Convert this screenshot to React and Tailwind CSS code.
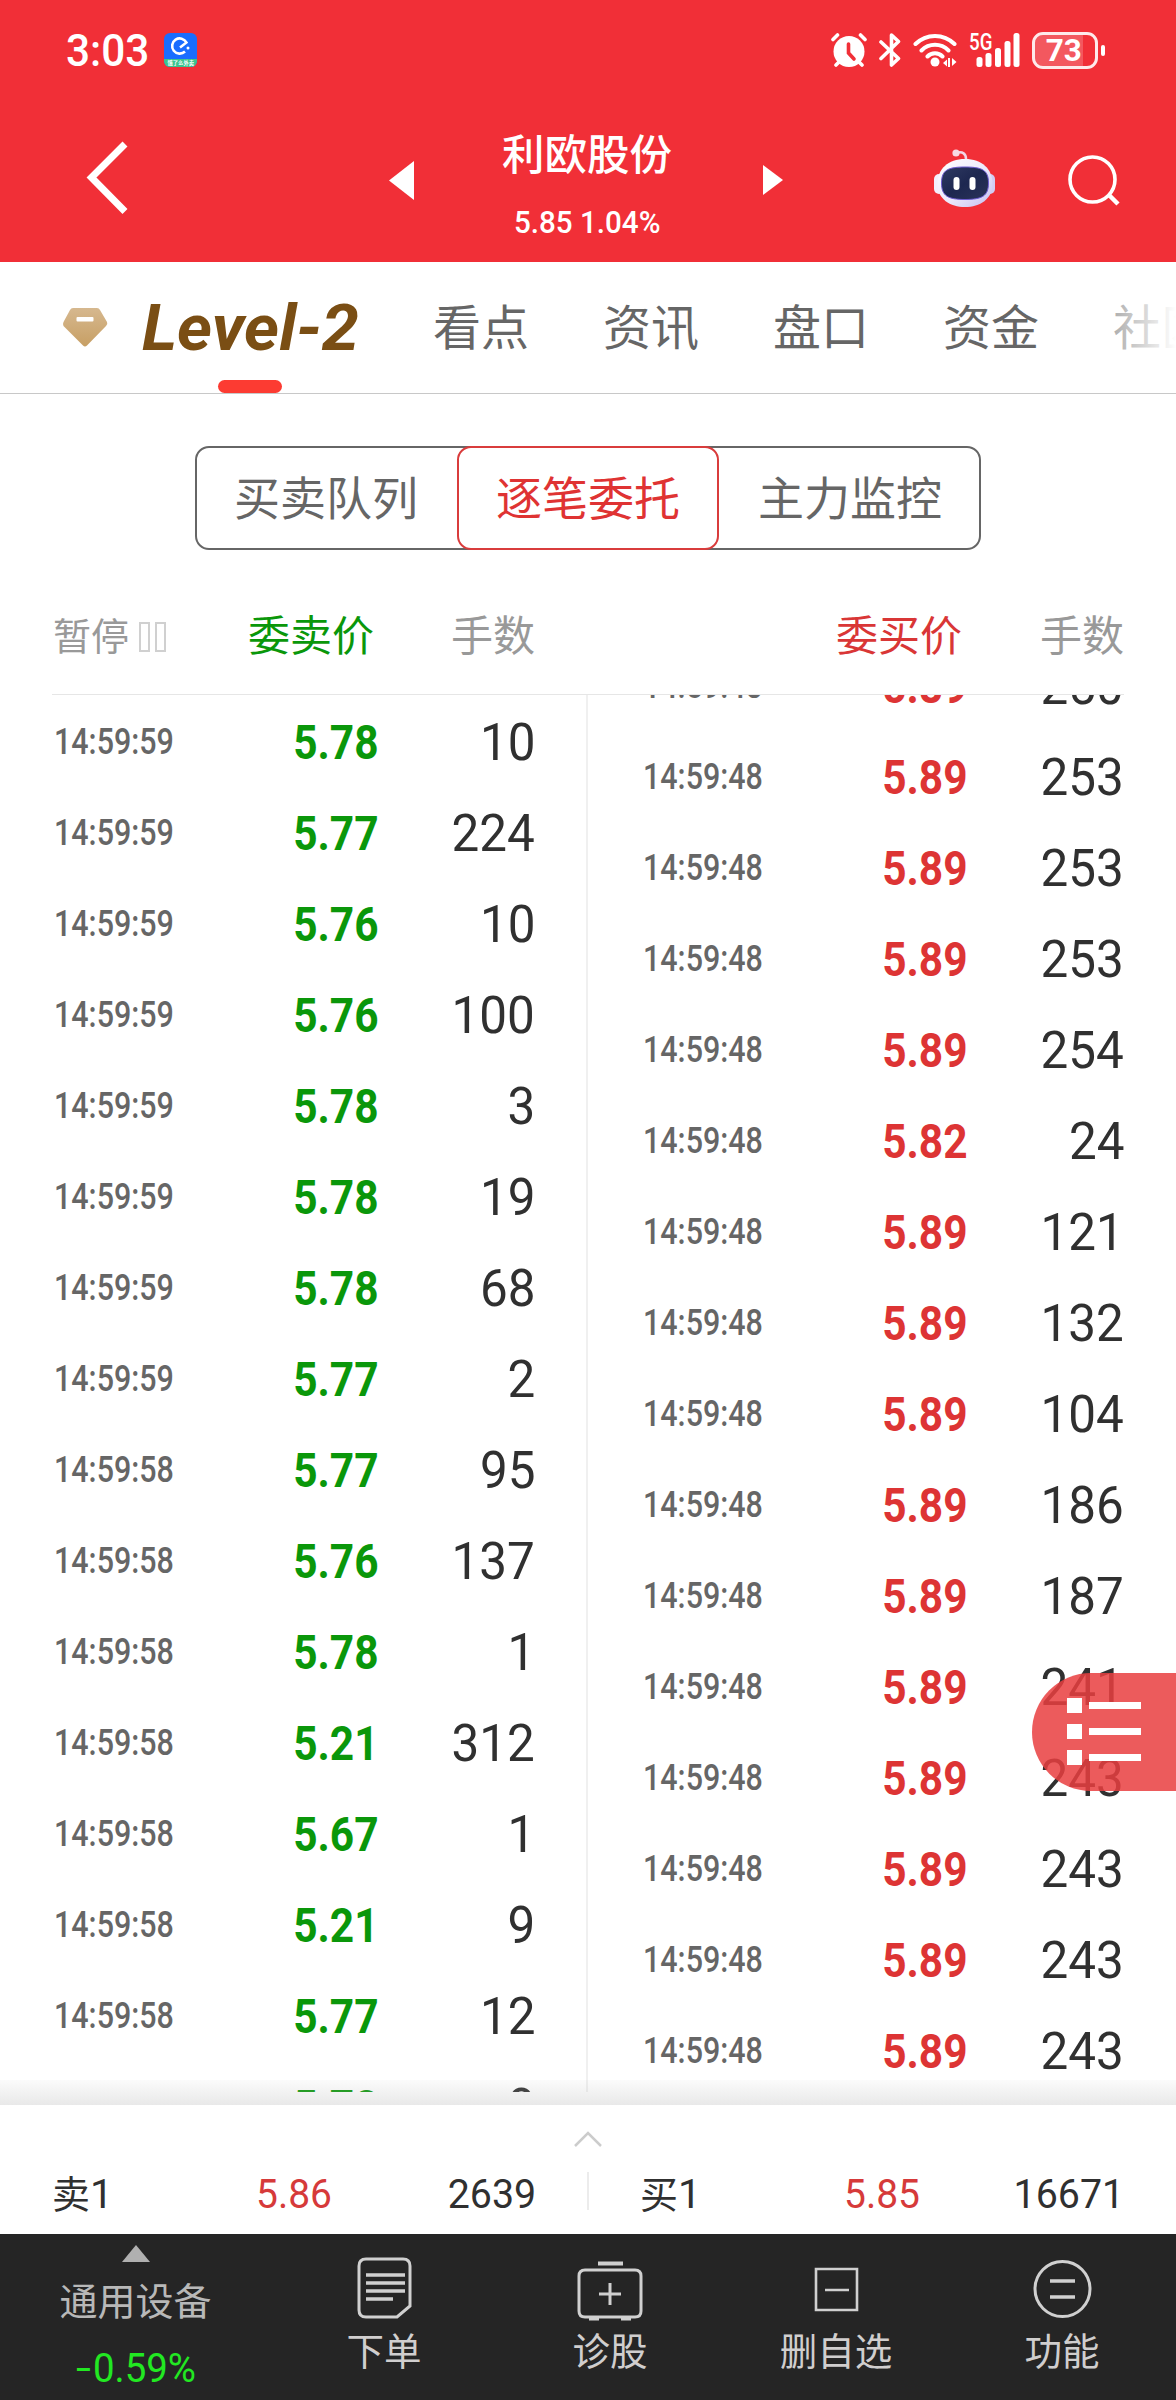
const SELL = [
  ["14:59:59", "5.78", "10"], ["14:59:59", "5.77", "224"], ["14:59:59", "5.76", "10"], ["14:59:59", "5.76", "100"],
  ["14:59:59", "5.78", "3"], ["14:59:59", "5.78", "19"], ["14:59:59", "5.78", "68"], ["14:59:59", "5.77", "2"],
  ["14:59:58", "5.77", "95"], ["14:59:58", "5.76", "137"], ["14:59:58", "5.78", "1"], ["14:59:58", "5.21", "312"],
  ["14:59:58", "5.67", "1"], ["14:59:58", "5.21", "9"], ["14:59:58", "5.77", "12"], ["14:59:58", "5.78", "8"],
];
const BUY = [
  ["5.89", "250"], ["5.89", "253"], ["5.89", "253"], ["5.89", "253"], ["5.89", "254"], ["5.82", "24"], ["5.89", "121"],
  ["5.89", "132"], ["5.89", "104"], ["5.89", "186"], ["5.89", "187"], ["5.89", "241"], ["5.89", "243"], ["5.89", "243"],
  ["5.89", "243"], ["5.89", "243"],
].map(([price, qty]) => ["14:59:48", price, qty]);

function StatusBar() {
  return (
    <div className="flex h-[100px] items-center pl-[66px] pr-[71px]">
      <span className="w-[83px] origin-left scale-x-[0.94] whitespace-nowrap text-[45px] font-medium leading-none">3:03</span>
      <svg className="ml-[15px]" width="33" height="34" viewBox="0 0 33 34">
        <defs><clipPath id="appClip"><rect width="33" height="34" rx="6" /></clipPath></defs>
        <g clipPath="url(#appClip)">
          <rect width="33" height="34" fill="#1a6dff" />
          <rect y="26" width="33" height="8" fill="#3cc48e" />
          <path d="M16 14.5l6.5-5A7.6 7.6 0 1 0 21 18.5" fill="none" stroke="#fff" strokeWidth="2.6" />
          <circle cx="24" cy="15" r="1.5" fill="#fff" />
        </g>
        <text x="3.500" y="32" fontSize="5.300" fontWeight="700" fill="#fff" fontFamily="Noto Sans CJK SC">饿了么外卖</text>
      </svg>
      <div className="ml-auto flex items-center">
        <svg width="36" height="34" viewBox="0 0 36 34" fill="none" stroke="#fff" strokeLinecap="round">
          <circle cx="18" cy="18.5" r="15.5" fill="#fff" stroke="none" />
          <path d="M2 6.500L6.500 2M34 6.500L29.500 2M5 32l4-4M31 32l-4-4" strokeWidth="3.600" />
          <path d="M17.500 11v9l5.500 6" stroke="#f12f37" strokeWidth="3.600" />
        </svg>
        <svg className="ml-[12px]" width="22" height="36" viewBox="0 0 22 36" fill="none" stroke="#fff" strokeWidth="3.600" strokeLinejoin="round" strokeLinecap="round">
          <path d="M2 10L19.500 26.500l-7 6.500V3l7 6.500L2 26.500" />
        </svg>
        <svg className="ml-[12px]" width="45" height="36" viewBox="0 0 45 36" fill="none" stroke="#fff" strokeWidth="4" strokeLinecap="round">
          <path d="M2.500 12a27.500 27.500 0 0 1 39 0M8.500 18.500a19 19 0 0 1 27 0M14.500 24.500a10.500 10.500 0 0 1 15 0" />
          <circle cx="22" cy="30" r="4.500" fill="#fff" stroke="none" />
          <path d="M30 31l4-3.500v7zM43.500 30l-4.500-4v8zM35 26h2v9h-2z" fill="#fff" stroke="none" />
        </svg>
        <div className="relative ml-[11px] h-9 w-[51px]">
          <span className="absolute left-0 top-[2px] origin-left scale-x-[0.78] text-[24px] font-medium leading-[17px]">5G</span>
          <svg width="51" height="36" viewBox="0 0 51 36" fill="#fff">
            <rect x="7.500" y="25" width="6" height="10" rx="2.500" />
            <rect x="16.500" y="21" width="6" height="14" rx="2.500" />
            <rect x="26" y="16" width="6" height="19" rx="2.500" />
            <rect x="35.500" y="9" width="6" height="26" rx="2.500" />
            <rect x="44.500" y="1" width="6" height="34" rx="2.500" />
          </svg>
        </div>
        <div className="ml-[12px] flex h-[37px] w-[66px] items-center overflow-hidden rounded-[11px] border-[3px] border-white/90">
          <div className="flex h-full w-[48px] items-center justify-end bg-white/20 pr-[1px]">
            <span className="origin-right scale-x-[0.98] text-[32px] font-bold leading-none">73</span>
          </div>
        </div>
        <div className="ml-[3px] h-[11px] w-1 rounded-sm bg-white" />
      </div>
    </div>
  );
}

function Robot() {
  return (
    <svg width="62" height="66" viewBox="0 0 62 66">
      <defs>
        <linearGradient id="head" x1="0" y1="0" x2="1" y2="1"><stop offset="0" stopColor="#fff" /><stop offset=".55" stopColor="#ece9fb" /><stop offset="1" stopColor="#c3bdf0" /></linearGradient>
        <linearGradient id="face" x1="0" y1="0" x2="1" y2="1"><stop offset="0" stopColor="#2f3a62" /><stop offset=".5" stopColor="#1d2750" /><stop offset="1" stopColor="#2a3358" /></linearGradient>
      </defs>
      <path d="M22 11c7-2 10 1 10 6" fill="none" stroke="#f3d6e6" strokeWidth="2.500" />
      <circle cx="22" cy="11" r="3.600" fill="#f7d9e2" />
      <rect x="0" y="32" width="10" height="20" rx="5" fill="#f4effc" />
      <rect x="51" y="32" width="10" height="20" rx="5" fill="#d2ccf4" />
      <path d="M31 17C48 17 58.500 27 58.500 42S46 65 31 65 3.500 57 3.500 42 14 17 31 17z" fill="url(#head)" />
      <path d="M31 25c17 0 23.500 3 23.500 16S48 57.500 31 57.500 7.500 54 7.500 41 14 25 31 25z" fill="url(#face)" stroke="#6d5bd0" strokeWidth="1" />
      <rect x="19.500" y="35" width="6" height="13" rx="3" fill="#fff" />
      <rect x="35.500" y="35" width="6" height="13" rx="3" fill="#fff" />
    </svg>
  );
}

function TitleBar() {
  return (
    <div className="flex h-[162px] items-start">
      <svg className="ml-[84px] mt-[38px]" width="48" height="80" viewBox="0 0 48 80"><path d="M41 6L7.500 39.500l33.500 34" fill="none" stroke="#fff" strokeWidth="7" /></svg>
      <svg className="ml-[257px] mt-[61px]" width="25" height="39" viewBox="0 0 25 39"><path d="M25 0v39L0 19.500z" fill="#fff" /></svg>
      <div className="ml-[22px] flex w-[302px] flex-col items-center pt-[25px]">
        <div className="text-[42.500px] font-medium leading-[62px]">利欧股份</div>
        <div className="mt-[16px] origin-center scale-x-[0.925] whitespace-nowrap text-[32px] font-medium leading-[38px]">5.85 1.04%</div>
      </div>
      <svg className="ml-[25px] mt-[65px]" width="20" height="30" viewBox="0 0 20 30"><path d="M0 0v30l20-15z" fill="#fff" /></svg>
      <div className="ml-[151px] mt-[42px]"><Robot /></div>
      <svg className="ml-[72px] mt-[54px]" width="52" height="52" viewBox="0 0 52 52" fill="none" stroke="#fff" strokeWidth="3.600">
        <circle cx="24.500" cy="25.500" r="22.500" /><path d="M41 41l9 9" strokeWidth="4.500" />
      </svg>
    </div>
  );
}

function Tabs() {
  return (
    <div className="relative flex h-[132px] items-start overflow-hidden border-b border-[#c8c8c8]">
      <svg className="ml-[62px] mt-[46px] shrink-0" width="46" height="40" viewBox="0 0 46 40">
        <defs><linearGradient id="gem" x1="0" y1="0" x2="0" y2="1"><stop offset="0" stopColor="#d6b88f" /><stop offset="1" stopColor="#c79f64" /></linearGradient></defs>
        <path d="M11 0h24q2 0 3 2l7 12q1 2-1 4L25 37.500q-2 2-4 0L1.500 18q-1-2 0-4L8 2q1-2 3-2z" fill="url(#gem)" />
        <rect x="14.500" y="9" width="17" height="4.500" rx="1" fill="#fff" />
      </svg>
      <div className="ml-[34px] mt-[22px] w-[291px] shrink-0">
        <div className="w-[209px] origin-left scale-x-[1.045] whitespace-nowrap text-[64px] font-bold italic leading-[90px] text-[#7a4e14]">Level-2</div>
      </div>
      <div className="mt-[32px] flex shrink-0 gap-[74px] text-[48px] leading-[70px] text-[#666]">
        {["看点", "资讯", "盘口", "资金", "社区"].map((t) => <span key={t} className="whitespace-nowrap">{t}</span>)}
      </div>
      <div className="absolute bottom-0 left-[218px] h-[13px] w-[64px] rounded-full bg-[#fc3b32]" />
      <div className="absolute bottom-0 right-0 top-0 w-[96px] bg-gradient-to-r from-white/20 to-white" />
    </div>
  );
}

function Segments() {
  return (
    <div className="mx-auto mt-[52px] flex h-[104px] w-[786px] items-stretch rounded-[14px] border-2 border-[#666] text-[46px] text-[#666]">
      <div className="flex flex-1 items-center justify-center pr-[2px] pt-[2px]">买卖队列</div>
      <div className="-my-[2px] flex w-[262px] items-center justify-center rounded-[14px] border-2 border-[#d93c3c] bg-white pt-[2px] text-[#df3333]">逐笔委托</div>
      <div className="flex flex-1 items-center justify-center pl-[2px] pt-[2px]">主力监控</div>
    </div>
  );
}

function Row({ row, color }) {
  return (
    <div className="flex h-[91px] shrink-0 items-center">
      <div className="w-[150px] pb-px pl-[2px]"><span className="inline-block origin-left scale-x-[0.846] whitespace-nowrap text-[36px] font-medium text-[#666]">{row[0]}</span></div>
      <div className={"flex w-[177px] justify-end pt-px " + color}><span className="inline-block origin-right scale-x-[0.875] text-[48.500px] font-bold">{row[1]}</span></div>
      <div className="flex w-[156px] justify-end text-[#303030]"><span className="inline-block origin-right scale-x-[0.95] text-[52px]">{row[2]}</span></div>
    </div>
  );
}

function Orders() {
  return (
    <div className="flex h-[1397px] overflow-hidden">
      <div className="w-[586px] pl-[52px] pt-[2px]">{SELL.map((r, i) => <Row key={i} row={r} color="text-[#0a970a]" />)}</div>
      <div className="w-[2px] bg-[#f0f0f0]" />
      <div className="-mt-[54px] w-[588px] pl-[53px]">{BUY.map((r, i) => <Row key={i} row={r} color="text-[#dd3434]" />)}</div>
    </div>
  );
}

function ColumnHead() {
  return (
    <div className="mx-[52px] mt-[54px] flex h-[91px] items-start border-b border-[#e6e6e6] text-[42px] leading-[66px]">
      <div className="flex w-[150px] items-center pl-px text-[38px] text-[#999]">
        暂停
        <span className="ml-[10px] h-[30px] w-[11px] border-2 border-[#d0d0d0]" />
        <span className="ml-[5px] h-[30px] w-[11px] border-2 border-[#d0d0d0]" />
      </div>
      <div className="w-[172px] text-right text-[#0a970a]">委卖价</div>
      <div className="w-[161px] text-right text-[#999]">手数</div>
      <div className="ml-[105px] w-[322px] text-right text-[#d93636]">委买价</div>
      <div className="w-[162px] text-right text-[#999]">手数</div>
    </div>
  );
}

function Quote({ label, price, qty }) {
  return (
    <div className="flex h-full flex-1 items-center pl-[52px] text-[41px] text-[#303030]">
      <div className="flex w-[110px] items-center"><span className="text-[38px]">{label}</span><span>1</span></div>
      <div className="w-[170px] text-right text-[#d63a3a]"><span className="inline-block origin-right scale-x-[0.95]">{price}</span></div>
      <div className="w-[204px] text-right"><span className="inline-block origin-right scale-x-[0.96]">{qty}</span></div>
    </div>
  );
}

function BestQuotes() {
  return (
    <div className="flex h-[129px] flex-col items-center bg-white">
      <svg className="mt-[24px]" width="30" height="20" viewBox="0 0 30 20"><path d="M2 17L15 4l13 13" fill="none" stroke="#ccc" strokeWidth="2.500" /></svg>
      <div className="mt-[13px] flex h-[66px] w-full items-center">
        <Quote label="卖" price="5.86" qty="2639" />
        <div className="-mx-px mb-[8px] h-[38px] w-[2px] bg-[#ececec]" />
        <Quote label="买" price="5.85" qty="16671" />
      </div>
    </div>
  );
}

const ICONS = {
  order: <><path d="M9 2h37q7 0 7 7v40L40 60H9q-7 0-7-7V9q0-7 7-7z" transform="translate(1 1)" /><path d="M10 19h39M10 27h39M10 35h39M10 43h27" strokeWidth="3.500" /></>,
  doctor: <><path d="M16 7.500h25" strokeWidth="4" /><path d="M3 14h50q6 0 6 6v35q0 6-6 6H3q-6 0-6-6V20q0-6 6-6z" /><path d="M28 27v22M17 38h22M7 63h10M39 63h10" /></>,
  remove: <><path d="M8 13h41v41H8zM17 34h24" strokeWidth="2.600" /></>,
  more: <><circle cx="28.500" cy="33" r="27.500" /><path d="M16 25h25M16 41h25" strokeWidth="3.500" /></>,
};

function NavBar() {
  const items = [["order", "下单"], ["doctor", "诊股"], ["remove", "删自选"], ["more", "功能"]];
  return (
    <div className="flex h-[166px] bg-[#252525] pr-px text-[#d0cece]">
      <div className="flex w-[271px] flex-col items-center pt-[11px]">
        <svg width="28" height="17" viewBox="0 0 28 17"><path d="M14 0l14 17H0z" fill="#b0b0b0" /></svg>
        <div className="mt-[12px] text-[38px] leading-[56px] text-[#b8b8b8]">通用设备</div>
        <div className="mt-[15px] flex items-center pl-[2px] text-[40px] leading-[48px] text-[#22e822]">
          <span className="mr-[2px] inline-block w-[15px] origin-left scale-x-[1.350]">-</span>
          <span className="w-[104px] origin-left scale-x-[0.960]">0.59%</span>
        </div>
      </div>
      {items.map(([id, label]) => (
        <div key={id} className="flex flex-1 flex-col items-center pt-[22px]">
          <svg className="overflow-visible" width="57" height="66" viewBox="0 0 57 66" fill="none" stroke="#d0d0d0" strokeWidth="3">{ICONS[id]}</svg>
          <div className="mt-[2px] text-[37.500px] leading-[56px]">{label}</div>
        </div>
      ))}
    </div>
  );
}

export default function App() {
  return (
    <div className="relative h-[2400px] w-[1176px] overflow-hidden bg-white font-['Roboto','Noto_Sans_CJK_SC',sans-serif]">
      <div className="h-[262px] bg-[#f12f37] text-white"><StatusBar /><TitleBar /></div>
      <Tabs />
      <Segments />
      <ColumnHead />
      <div className="relative h-[1410px]">
        <Orders />
        <div className="absolute bottom-0 left-0 right-0 h-[25px] bg-gradient-to-b from-[#b4b4b4]/5 to-[#b4b4b4]/30" />
      </div>
      <BestQuotes />
      <NavBar />
      <div className="absolute right-0 top-[1673px] flex h-[118px] w-[144px] flex-col justify-center gap-[11px] rounded-l-full bg-[#e93e40]/85 pb-[1px] pl-[35px]">
        {[0, 1, 2].map((i) => (
          <div key={i} className="flex items-center gap-[7px]"><div className="h-[15px] w-[15px] bg-white" /><div className="h-[7px] w-[52px] bg-white" /></div>
        ))}
      </div>
    </div>
  );
}
